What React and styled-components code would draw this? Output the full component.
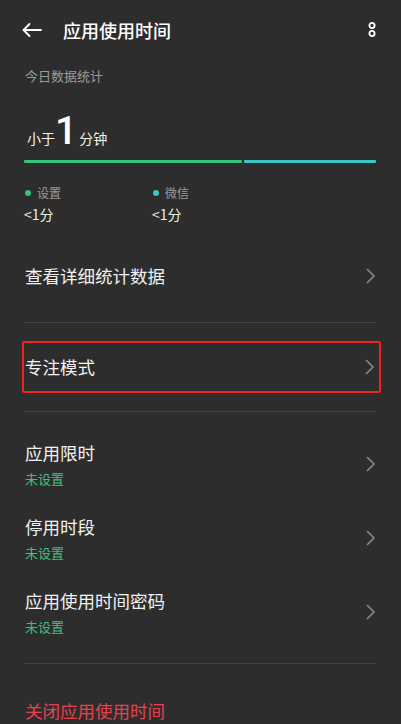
import React from 'react';
import styled, { createGlobalStyle } from 'styled-components';

const GlobalStyle = createGlobalStyle`
  html, body {
    margin: 0;
    padding: 0;
    background: #2e2d2e;
  }
  body {
    font-family: "Noto Sans CJK SC", "Noto Sans", sans-serif;
    color: #f2f2f2;
  }
`;

const Page = styled.div`
  width: 401px;
  min-height: 724px;
  background: #2e2d2e;
  overflow: hidden;
`;

// Top bar
const Header = styled.div`
  height: 60px;
  display: flex;
  align-items: center;
  padding: 0 25px 0 22px;
`;

const BackButton = styled.div`
  width: 20px;
  height: 14px;
  display: flex;
  margin-right: 21px;
`;

const Title = styled.h1`
  flex: 1;
  margin: 0;
  font-size: 18px;
  font-weight: 500;
  color: #ffffff;
  line-height: 24px;
`;

const MoreButton = styled.div`
  width: 8px;
  height: 16px;
  display: flex;
`;

// Today's stats
const Stats = styled.div`
  padding: 0 25px 0 24px;
`;

const SectionLabel = styled.div`
  font-size: 13px;
  line-height: 24px;
  height: 24px;
  margin-top: 4px;
  color: #9c9c9c;
  padding-left: 1px;
`;

const Total = styled.div`
  display: flex;
  align-items: baseline;
  margin-top: 23px;
  height: 40px;
  padding-left: 3px;
`;

const Unit = styled.span`
  font-size: 14px;
  color: #f4f4f4;
`;

const Big = styled.span`
  font-family: Roboto, "Noto Sans", sans-serif;
  font-size: 39px;
  font-weight: 500;
  color: #ffffff;
  line-height: 40px;
  margin: 0 2px 0 0;
`;

const Bar = styled.div`
  display: flex;
  gap: 2px;
  margin-top: 9px;
  height: 3px;
`;

const Segment = styled.div`
  height: 3px;
  flex: ${p => p.$share};
  background: ${p => p.$color};
  border-radius: 1px;
`;

const Legend = styled.div`
  display: grid;
  grid-template-columns: 128px 128px;
  margin-top: 22px;
`;

const LegendItem = styled.div`
  display: flex;
  flex-direction: column;
`;

const LegendName = styled.div`
  display: flex;
  align-items: center;
  font-size: 12px;
  line-height: 16px;
  color: #9c9c9c;
  padding-left: 1px;
`;

const Dot = styled.span`
  width: 6px;
  height: 6px;
  border-radius: 50%;
  background: ${p => p.$color};
  margin-right: 6px;
`;

const LegendValue = styled.div`
  font-size: 14px;
  line-height: 20px;
  margin-top: 3px;
  color: #f0f0f0;
`;

// Settings list
const List = styled.div`
  padding: 0 25px 0 24px;
`;

const Row = styled.div`
  display: flex;
  align-items: center;
  justify-content: space-between;
  height: ${p => p.$height}px;
  box-sizing: border-box;
  padding: ${p => p.$padding || '0'};
`;

const FocusFrame = styled.div`
  margin: 18px -5px 18px -2px;
  height: 52px;
  box-sizing: border-box;
  border: 2px solid #f0241e;
  border-radius: 2px;
  display: flex;
  align-items: center;
  justify-content: space-between;
  padding: 0 4px 0 0;
`;

const RowText = styled.div`
  display: flex;
  flex-direction: column;
`;

const RowTitle = styled.div`
  font-size: 17.5px;
  line-height: 24px;
  color: #f2f2f2;
  padding-left: 1px;
`;

const RowSub = styled.div`
  font-size: 13px;
  line-height: 18px;
  margin-top: 5px;
  color: #3cc27e;
  padding-left: 1px;
`;

const Divider = styled.div`
  height: 1px;
  background: #434243;
`;

const DangerText = styled.div`
  font-size: 17.5px;
  line-height: 24px;
  color: #e8404f;
  padding-left: 1px;
`;

const Arrow = () => (
  <svg width="20" height="14" viewBox="0 0 20 14" fill="none">
    <path d="M19 7H1.5M7.5 1L1.5 7l6 6" stroke="#fff" strokeWidth="1.8" strokeLinecap="round" strokeLinejoin="round" />
  </svg>
);

const Dots = () => (
  <svg width="8" height="16" viewBox="0 0 8 16" fill="none">
    <circle cx="4" cy="3.5" r="2.6" stroke="#fff" strokeWidth="1.8" />
    <circle cx="4" cy="11.5" r="2.6" stroke="#fff" strokeWidth="1.8" />
  </svg>
);

const Chevron = () => (
  <svg width="10" height="16" viewBox="0 0 10 16" fill="none">
    <path d="M1.5 1.5L8 8l-6.5 6.5" stroke="#8b8a8b" strokeWidth="1.6" strokeLinecap="round" strokeLinejoin="round" />
  </svg>
);

const usage = [
  { name: '设置', value: '<1分', color: '#34c27d', share: 218 },
  { name: '微信', value: '<1分', color: '#3ac8c6', share: 132 },
];

const limits = ['应用限时', '停用时段', '应用使用时间密码'];

export default function App() {
  return (
    <Page>
      <GlobalStyle />
      <Header>
        <BackButton><Arrow /></BackButton>
        <Title>应用使用时间</Title>
        <MoreButton><Dots /></MoreButton>
      </Header>

      <Stats>
        <SectionLabel>今日数据统计</SectionLabel>
        <Total>
          <Unit>小于</Unit>
          <Big>1</Big>
          <Unit>分钟</Unit>
        </Total>
        <Bar>
          {usage.map(u => (
            <Segment key={u.name} $share={u.share} $color={u.color} />
          ))}
        </Bar>
        <Legend>
          {usage.map(u => (
            <LegendItem key={u.name}>
              <LegendName><Dot $color={u.color} />{u.name}</LegendName>
              <LegendValue>{u.value}</LegendValue>
            </LegendItem>
          ))}
        </Legend>
      </Stats>

      <List>
        <Row $height={98} $padding="6px 0 0 0">
          <RowTitle>查看详细统计数据</RowTitle>
          <Chevron />
        </Row>
        <Divider />
        <FocusFrame>
          <RowTitle>专注模式</RowTitle>
          <Chevron />
        </FocusFrame>
        <Divider />
        <Row $height={15} />
        {limits.map(name => (
          <Row key={name} $height={74}>
            <RowText>
              <RowTitle>{name}</RowTitle>
              <RowSub>未设置</RowSub>
            </RowText>
            <Chevron />
          </Row>
        ))}
        <Row $height={14} />
        <Divider />
        <Row $height={94} $padding="0 0 0 0">
          <DangerText>关闭应用使用时间</DangerText>
        </Row>
      </List>
    </Page>
  );
}
